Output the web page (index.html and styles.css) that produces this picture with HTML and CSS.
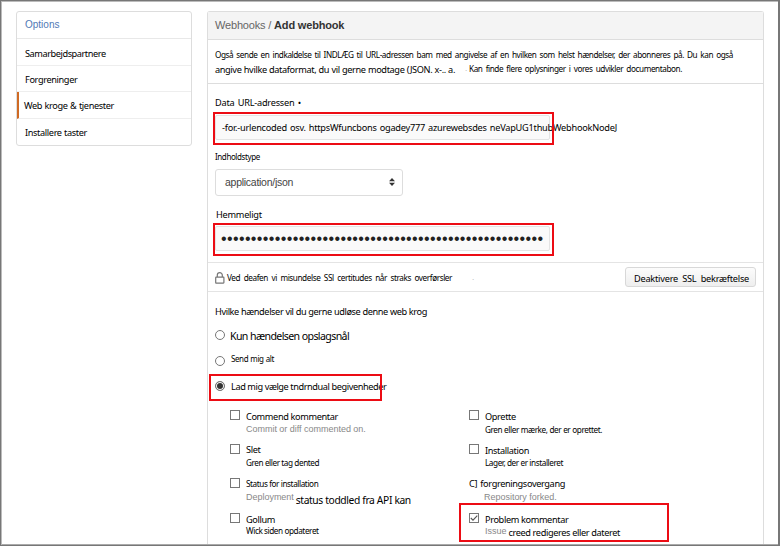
FILE: index.html
```html
<!DOCTYPE html>
<html lang="da">
<head>
<meta charset="utf-8">
<title>Add webhook</title>
<link rel="stylesheet" href="styles.css">
</head>
<body>
<div class="frame">
  <nav class="menu">
    <div class="menu-head">Options</div>
    <div class="menu-item"><span class="t w81 snug">Samarbejdspartnere</span></div>
    <div class="menu-item"><span class="t w52">Forgreninger</span></div>
    <div class="menu-item active"><span class="t w90">Web kroge &amp; tjenester</span></div>
    <div class="menu-item last"><span class="t w62">Installere taster</span></div>
  </nav>
  <main class="panel">
    <header class="panel-head">Webhooks / <b>Add webhook</b></header>
    <section class="intro">
      <div class="t small w518">Også sende en indkaldelse til INDLÆG til URL-adressen bam med angivelse af en hvilken som helst hændelser, der abonneres på. Du kan også</div>
      <div class="intro-row"><span class="t w240">angive hvilke dataformat, du vil gerne modtage (JSON. x-.. a.</span><span class="faint">.</span><span class="t small w211">Kan finde flere oplysninger i vores udvikler documentabon.</span></div>
    </section>
    <section class="form">
      <div class="t w86 loose">Data URL-adressen •</div>
      <div class="input url"><span class="t w395 loose">-for.-urlencoded osv. httpsWfuncbons ogadey777 azurewebsdes neVapUG1thubWebhookNodeJ</span><i class="mark"></i></div>
      <div class="t tiny type-label">Indholdstype</div>
      <div class="select"><span>application/json</span>
        <svg width="6" height="8" viewBox="0 0 6 8"><path d="M3 0 6 3.3H0ZM3 8 0 4.7H6Z" fill="#333"/></svg>
      </div>
      <div class="t secret-label">Hemmeligt</div>
      <div class="input secret"><span class="dots">••••••••••••••••••••••••••••••••••••••••••••••••••••••</span><i class="mark"></i></div>
    </section>
    <section class="ssl">
      <svg class="lock" width="10" height="12" viewBox="0 0 10 12"><rect x=".7" y="5.2" width="8.2" height="5.9" rx=".5" fill="#fff" stroke="#777" stroke-width="1.2"/><path d="M2.3 5V3.1a2.5 2.5 0 0 1 5 0V5" fill="none" stroke="#777" stroke-width="1.2"/></svg>
      <span class="t small w225">Ved deafen vi misundelse SSl certitudes når straks overførsler</span><span class="faint ssl-dot">.</span>
      <button class="btn"><span class="t w115 loose">Deaktivere SSL bekræftelse</span></button>
    </section>
    <section class="events">
      <div class="t w212 question">Hvilke hændelser vil du gerne udløse denne web krog</div>
      <div class="radio"><i class="ring first"></i><span class="t big w119">Kun hændelsen opslagsnål</span></div>
      <div class="radio"><i class="ring"></i><span class="t tiny w43 up">Send mig alt</span></div>
      <div class="radio"><i class="ring on"></i><span class="t w155 down">Lad mig vælge tndrndual begivenheder</span><i class="mark"></i></div>
      <div class="grid">
        <div class="opt"><i class="box"></i><div><div class="t w92 low">Commend kommentar</div><div class="grey">Commit or diff commented on.</div></div></div>
        <div class="opt"><i class="box"></i><div><div class="t low">Oprette</div><div class="t small w117 drop">Gren eller mærke, der er oprettet.</div></div></div>
        <div class="opt"><i class="box"></i><div><div class="t">Slet</div><div class="t small w71 drop">Gren eller tag dented</div></div></div>
        <div class="opt"><i class="box"></i><div><div class="t low">Installation</div><div class="t small w78 drop2">Lager, der er installeret</div></div></div>
        <div class="opt"><i class="box"></i><div><div class="t small w70">Status for installation</div><div class="mix"><span class="grey">Deployment</span><span class="t mid w115">status toddled fra API kan</span></div></div></div>
        <div class="opt bare"><div><div class="t w96">C] forgreningsovergang</div><div class="grey inset">Repository forked.</div></div></div>
        <div class="opt"><i class="box"></i><div><div class="t low">Gollum</div><div class="t small w71 tight">Wick siden opdateret</div></div></div>
        <div class="opt"><i class="box"><svg width="8" height="8" viewBox="0 0 8 8"><path d="M.8 4 3 6.2 7.3 1.7" fill="none" stroke="#555" stroke-width="1.1"/></svg></i><div><div class="t w81 low">Problem kommentar</div><div class="mix issue"><span class="grey">Issue</span><span class="t w111">creed redigeres eller dateret</span></div></div><i class="mark"></i></div>
      </div>
    </section>
  </main>
</div>
</body>
</html>
```

FILE: styles.css
```css
* { box-sizing: border-box; }
body { margin: 0; background: #fff; overflow: hidden; font-family: "Liberation Sans", Arial, sans-serif; color: #000; }
i { font-style: normal; }
.frame { width: 780px; height: 546px; border: 1px solid #777; border-right-width: 2px; box-shadow: inset 1px 1px 0 #bbb, inset 0 -1px 0 #aaa; display: flex; align-items: flex-start; gap: 15px; padding: 10px 15px 1px; overflow: hidden; }

/* Text set to a measured width */
.t { display: block; font: 9.2px/14px "Noto Sans", sans-serif; letter-spacing: -.37px; white-space: nowrap; text-align-last: justify; }
.t.loose { letter-spacing: -.23px; }
.t.snug { letter-spacing: -.44px; }
.t.small { font-size: 8.2px; letter-spacing: -.42px; }
.t.tiny { font-size: 8px; letter-spacing: -.4px; }
.t.mid { font-size: 10.3px; letter-spacing: -.4px; }
.t.big { font-size: 10.6px; letter-spacing: -.62px; }
.w43 { width: 43px; } .w52 { width: 52px; } .w62 { width: 62px; } .w70 { width: 70px; }
.w71 { width: 71px; } .w78 { width: 78px; } .w81 { width: 81px; } .w86 { width: 86px; }
.w90 { width: 90px; } .w92 { width: 92px; } .w96 { width: 96px; } .w111 { width: 111px; }
.w115 { width: 115px; } .w117 { width: 117px; } .w119 { width: 119px; }
.w155 { width: 155px; letter-spacing: -.42px; } .w211 { width: 213px; } .w212 { width: 212px; letter-spacing: -.4px; } .w225 { width: 225px; }
.w240 { width: 240px; } .w395 { width: 395px; } .w518 { width: 518px; }

.menu { width: 176px; height: 135px; border: 1px solid #ddd; border-radius: 3px; flex: none; }
.menu-head { height: 27px; padding-left: 8px; font-size: 10px; line-height: 26px; color: #5079b5; border-bottom: 1px solid #e8e8e8; }
.menu-item { height: 26.5px; padding: 7.5px 0 0 8px; border-bottom: 1px solid #eee; }
.menu-item.active { border-left: 2px solid #cf6a24; padding: 7px 0 0 5px; }
.menu-item.last { border-bottom: 0; }

.panel { width: 557px; height: 533px; border: 1px solid #ddd; border-bottom: 0; border-radius: 3px 3px 0 0; flex: none; }
.panel-head { height: 28px; padding-left: 7px; background: #f4f4f4; border-bottom: 1px solid #ddd; font-size: 11px; line-height: 27px; color: #666; letter-spacing: -.17px; }
.panel-head b { color: #333; }
.intro { height: 44px; padding: 8px 0 0 7px; border-bottom: 1px solid #ddd; }
.intro-row { display: flex; }
.intro-row .t:first-child { margin-top: 1px; }
.faint { color: #aaa; font-size: 8px; line-height: 14px; width: 4px; margin-left: 10px; }
.form { height: 179px; padding: 12px 0 0 7px; border-bottom: 1px solid #e4e4e4; }
.input { position: relative; width: 335px; height: 25px; border: 1px solid #e4e4e4; border-radius: 2px; background: #fafafa; padding-left: 6px; white-space: nowrap; }
.mark { position: absolute; border: 2px solid #ec0c14; pointer-events: none; }
.input .mark { left: -3px; top: -4px; width: 341px; height: 33px; }
.url { margin-top: 5px; }
.url .t { margin-top: 5px; }
.type-label { margin-top: 10px; }
.select { display: flex; justify-content: space-between; align-items: center; width: 188px; height: 27px; margin-top: 5px; padding: 0 7px 1px 9px; border: 1px solid #ddd; border-radius: 3px; font-size: 10.5px; letter-spacing: -.27px; color: #444; }
.secret-label { margin: 12px 0 0 1px; letter-spacing: -.25px; }
.secret { margin-top: 4px; height: 25px; }
.dots { font-size: 16px; line-height: 24px; letter-spacing: .37px; color: #222; margin-left: -1px; display: block; height: 23px; }
.ssl { display: flex; align-items: flex-start; height: 29px; padding: 4px 7px 0; border-bottom: 1px solid #e4e4e4; }
.lock { margin-top: 5px; }
.ssl > .t { margin: 4px 0 0 2px; }
.ssl-dot { margin: 4px 0 0 20px; }
.btn { width: 131px; height: 20px; margin-left: auto; padding: 3px 0 0 8px; border: 1px solid #d8d8d8; border-radius: 3px; background: linear-gradient(#fcfcfc, #eee); text-align: left; }
.events { padding: 13px 0 0 7px; }
.question { margin-bottom: 4px; }
.radio { position: relative; display: flex; align-items: center; height: 25px; }
.ring { width: 10px; height: 10px; border: 1px solid #777; border-radius: 50%; margin-right: 5px; flex: none; }
.ring.first { margin-bottom: 2px; }
.ring.on { background: #333; box-shadow: inset 0 0 0 1px #fff; }
.radio .up { margin: 0 0 3px 1px; }
.radio .down { margin: 2px 0 0 1px; }
.radio .mark { left: -6px; top: 1px; width: 173px; height: 27px; }
.grid { display: grid; grid-template-columns: 239px 220px; grid-template-rows: 34px 34px 35px 34px; margin: 11px 0 0 15px; }
.opt { position: relative; display: flex; align-items: flex-start; }
.box { width: 10px; height: 10px; margin: 1px 6px 0 0; border: 1px solid #777; flex: none; }
.box svg { display: block; }
.grey { font-size: 9px; line-height: 12px; color: #888; white-space: nowrap; letter-spacing: -.02px; }
.low { margin-top: 1px; }
.low + .grey { margin-top: -1px; }
.drop { margin-top: -1px; }
.drop2 { margin-top: -2px; }
.tight { margin-top: -3px; }
.mix { display: flex; gap: 2px; }
.mix .t { margin-top: 2px; }
.inset { margin-left: 15px; }
.issue { margin-top: -2px; }
.issue .t { margin-top: 1px; }
.opt .mark { left: -10px; top: -9px; width: 210px; height: 39px; }
```
